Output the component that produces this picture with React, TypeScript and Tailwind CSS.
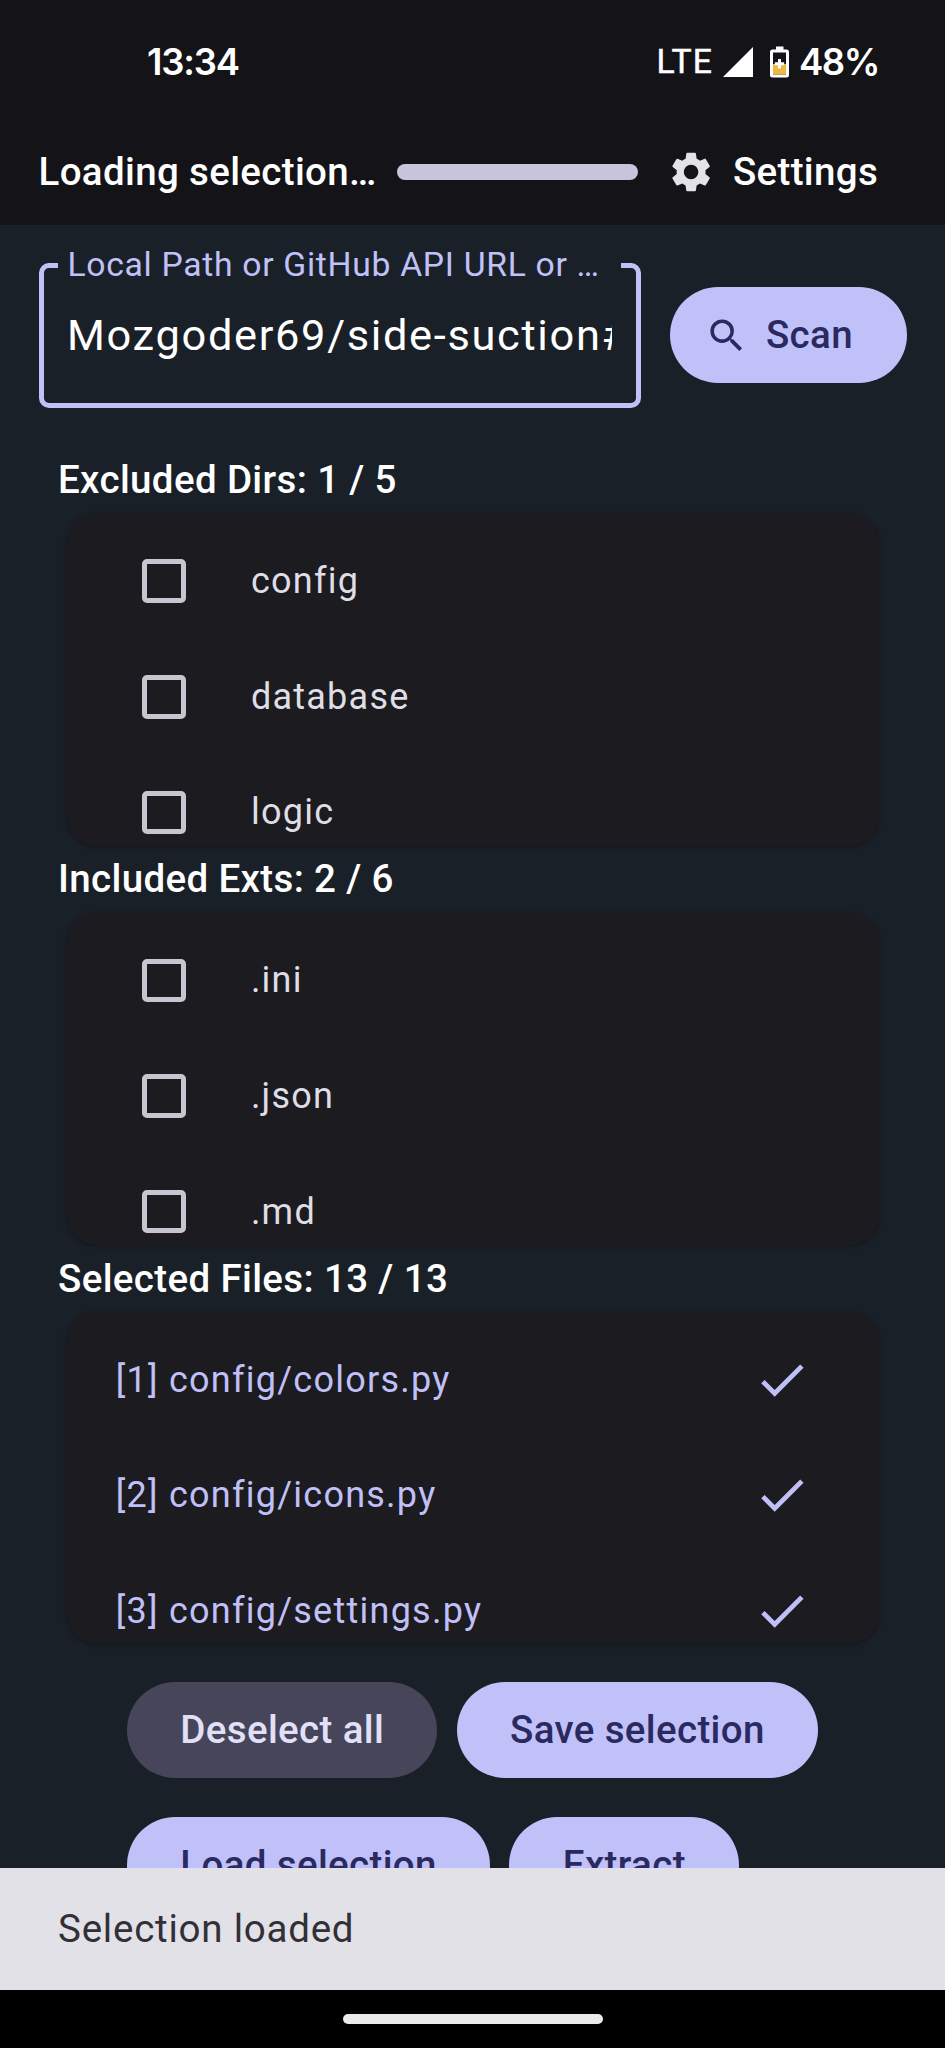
import type { ReactNode } from "react";
import { MdCheck, MdSearch, MdSettings } from "react-icons/md";

function StatusBar() {
  return (
    <div className="flex h-[119px] items-center pt-[5px] pl-[147px] text-white">
      <span className="w-[509.5px] font-[Inter,sans-serif] text-[36.5px] font-semibold tracking-[-1.2px]">13:34</span>
      <span className="w-[66.5px] text-[33.7px] tracking-[1.3px] [-webkit-text-stroke:0.5px_white]">LTE</span>
      <svg className="h-[30px] w-[30px]" viewBox="0 0 30 30" fill="white">
        <path d="M30 0V30H0Z" />
      </svg>
      <svg className="ml-[17px] h-[32px] w-[19px]" viewBox="0 0 19 32">
        <path d="M6 0.5h7.5v4H6z" fill="white" />
        <rect x="1.5" y="5" width="16" height="25" rx="1" fill="none" stroke="white" strokeWidth="3" />
        <path d="M3 18h13v10.5H3z" fill="#edb945" />
        <path d="M8 13h3v3.2h3.2v3H11v3.2H8v-3.2H4.8v-3H8z" fill="white" />
      </svg>
      <span className="ml-[10px] font-[Inter,sans-serif] text-[36.5px] font-semibold tracking-[-1.5px]">48%</span>
    </div>
  );
}

function AppBar() {
  return (
    <div className="flex h-[106px] items-center pl-[38.5px] text-[38.5px] font-medium tracking-[0.35px] text-white">
      <span className="w-[358.5px] whitespace-nowrap">Loading selection…</span>
      <div className="h-[15.4px] w-[240.7px] rounded-full bg-[#c7c4dc]" />
      <MdSettings className="ml-[29px] size-[48.2px] text-[#e3e1e9]" />
      <span className="ml-[18px]">Settings</span>
    </div>
  );
}

function Section({ title, children }: { title: string; children: ReactNode }) {
  return (
    <section>
      <h2 className="flex h-[67.2px] items-center pl-[58px] text-[38.5px] font-medium tracking-[0.36px] text-white">{title}</h2>
      <div className="mr-[66.5px] ml-[66.7px] h-[332px] overflow-hidden rounded-[29px] bg-[#1c1b1f] pt-[9.7px] shadow-[0_1px_4px_rgba(0,0,0,0.3)]">
        {children}
      </div>
    </section>
  );
}

function CheckRow({ label }: { label: string }) {
  return (
    <div className="flex h-[115.6px] items-center pl-[75.3px]">
      <div className="size-[43.6px] rounded-[5px] border-[5px] border-[#c8c5d0]" />
      <span className="ml-[65.3px] text-[36px] tracking-[1.25px] text-[#dfdde5]">{label}</span>
    </div>
  );
}

function FileRow({ label }: { label: string }) {
  return (
    <div className="flex h-[115.6px] items-center justify-between pr-[67.4px] pl-[49px] text-[#c0c0f8]">
      <span className="text-[36px] tracking-[1.25px]">{label}</span>
      <MdCheck className="size-[57.8px]" />
    </div>
  );
}

function Button({ label, muted = false }: { label: string; muted?: boolean }) {
  return (
    <button
      className={`flex h-[96.4px] items-center rounded-full px-[53.3px] text-[38.5px] font-medium tracking-[0.36px] whitespace-nowrap ${
        muted ? "bg-[#464559] text-[#e2e0f9]" : "bg-[#c1c1fa] text-[#2a2a60]"
      }`}
    >
      {label}
    </button>
  );
}

export default function App() {
  return (
    <div className="flex h-[2048px] w-[945px] flex-col overflow-hidden bg-[#1a2027] font-[Roboto,sans-serif]">
      <header className="h-[225px] shrink-0 bg-[#141318]">
        <StatusBar />
        <AppBar />
      </header>
      <main className="h-[1643px] shrink-0 overflow-hidden bg-[#1a2027]">
        <div className="flex pt-[38px] pl-[38.5px]">
          <div className="relative flex h-[145px] w-[602.5px] items-center rounded-[10px] border-[5px] border-[#c1c1fa] pl-[23.5px]">
            <span className="absolute -top-[27px] left-[14.5px] h-[48px] w-[563px] bg-[#1a2027] pl-[9.5px] text-[33.7px] leading-[48px] tracking-[0.69px] whitespace-nowrap text-[#c1c1fa]">
              Local Path or GitHub API URL or …
            </span>
            <span className="w-[545px] overflow-hidden text-[43.4px] tracking-[1.66px] whitespace-nowrap text-white">
              Mozgoder69/side-suction#
            </span>
          </div>
          <button className="mt-[24px] ml-[28.5px] flex h-[96.4px] w-[237.5px] items-center rounded-full bg-[#c1c1fa] pl-[35.5px] text-[38.5px] font-medium tracking-[0.36px] text-[#2a2a60]">
            <MdSearch className="size-[43.4px]" />
            <span className="ml-[17.5px]">Scan</span>
          </button>
        </div>
        <div className="pt-[38.5px]">
          <Section title="Excluded Dirs: 1 / 5">
            <CheckRow label="config" />
            <CheckRow label="database" />
            <CheckRow label="logic" />
          </Section>
          <Section title="Included Exts: 2 / 6">
            <CheckRow label=".ini" />
            <CheckRow label=".json" />
            <CheckRow label=".md" />
          </Section>
          <Section title="Selected Files: 13 / 13">
            <FileRow label="[1] config/colors.py" />
            <FileRow label="[2] config/icons.py" />
            <FileRow label="[3] config/settings.py" />
          </Section>
        </div>
        <div className="flex flex-wrap gap-x-[19.3px] gap-y-[38.6px] pt-[38px] pr-[100px] pl-[127px]">
          <Button label="Deselect all" muted />
          <Button label="Save selection" />
          <Button label="Load selection" />
          <Button label="Extract" />
        </div>
      </main>
      <div className="flex h-[122px] shrink-0 items-center bg-[#e2e1e7] pl-[58px] text-[38.5px] tracking-[0.77px] text-[#313036]">
        Selection loaded
      </div>
      <footer className="flex grow justify-center bg-black pt-[24px]">
        <div className="h-[10px] w-[260px] rounded-full bg-[#ebebeb]" />
      </footer>
    </div>
  );
}
